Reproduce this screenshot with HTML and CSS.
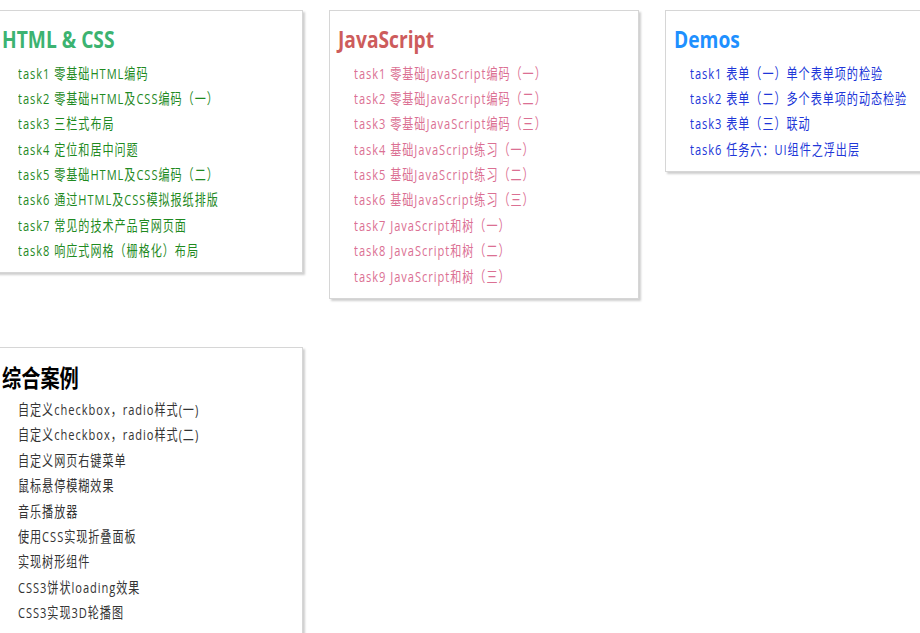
FILE: index.html
```html
<!DOCTYPE html>
<html lang="zh-CN">
<head>
<meta charset="utf-8">
<title>IFE 任务列表</title>
<link rel="stylesheet" href="styles.css">
</head>
<body>
<main class="board">
  <section class="card card-html">
    <h2 class="card-title"><span class="sq">HTML &amp; CSS</span></h2>
    <ul class="tasks">
      <li><a class="sq" href="#">task1 零基础HTML编码</a></li>
      <li><a class="sq" href="#">task2 零基础HTML及CSS编码（一）</a></li>
      <li><a class="sq" href="#">task3 三栏式布局</a></li>
      <li><a class="sq" href="#">task4 定位和居中问题</a></li>
      <li><a class="sq" href="#">task5 零基础HTML及CSS编码（二）</a></li>
      <li><a class="sq" href="#">task6 通过HTML及CSS模拟报纸排版</a></li>
      <li><a class="sq" href="#">task7 常见的技术产品官网页面</a></li>
      <li><a class="sq" href="#">task8 响应式网格（栅格化）布局</a></li>
    </ul>
  </section>
  <section class="card card-js">
    <h2 class="card-title"><span class="sq">JavaScript</span></h2>
    <ul class="tasks">
      <li><a class="sq" href="#">task1 零基础JavaScript编码（一）</a></li>
      <li><a class="sq" href="#">task2 零基础JavaScript编码（二）</a></li>
      <li><a class="sq" href="#">task3 零基础JavaScript编码（三）</a></li>
      <li><a class="sq" href="#">task4 基础JavaScript练习（一）</a></li>
      <li><a class="sq" href="#">task5 基础JavaScript练习（二）</a></li>
      <li><a class="sq" href="#">task6 基础JavaScript练习（三）</a></li>
      <li><a class="sq" href="#">task7 JavaScript和树（一）</a></li>
      <li><a class="sq" href="#">task8 JavaScript和树（二）</a></li>
      <li><a class="sq" href="#">task9 JavaScript和树（三）</a></li>
    </ul>
  </section>
  <section class="card card-demo">
    <h2 class="card-title"><span class="sq">Demos</span></h2>
    <ul class="tasks">
      <li><a class="sq" href="#">task1 表单（一）单个表单项的检验</a></li>
      <li><a class="sq" href="#">task2 表单（二）多个表单项的动态检验</a></li>
      <li><a class="sq" href="#">task3 表单（三）联动</a></li>
      <li><a class="sq" href="#">task6 任务六：UI组件之浮出层</a></li>
    </ul>
  </section>
  <section class="card card-case">
    <h2 class="card-title"><span class="sq">综合案例</span></h2>
    <ul class="tasks">
      <li><a class="sq" href="#">自定义checkbox，radio样式(一)</a></li>
      <li><a class="sq" href="#">自定义checkbox，radio样式(二)</a></li>
      <li><a class="sq" href="#">自定义网页右键菜单</a></li>
      <li><a class="sq" href="#">鼠标悬停模糊效果</a></li>
      <li><a class="sq" href="#">音乐播放器</a></li>
      <li><a class="sq" href="#">使用CSS实现折叠面板</a></li>
      <li><a class="sq" href="#">实现树形组件</a></li>
      <li><a class="sq" href="#">CSS3饼状loading效果</a></li>
      <li><a class="sq" href="#">CSS3实现3D轮播图</a></li>
    </ul>
  </section>
</main>
</body>
</html>
```
FILE: styles.css
```css
html {
  overflow: hidden;
}

body {
  margin: 0;
  background: #fff;
  font-family: "Open Sans", "Noto Sans CJK SC", sans-serif;
}

.board {
  display: grid;
  grid-template-columns: repeat(3, 310px);
  column-gap: 26px;
  row-gap: 48px;
  align-items: start;
  margin: 10px 0 0 -7px;
  width: 1000px;
}

.card {
  box-sizing: border-box;
  border: 1px solid #d6d6d6;
  box-shadow: 2px 2px 2px #cfcfcf;
  background: #fff;
  padding: 14px 8px 8.5px;
}

.card-title {
  margin: 0 0 7.5px;
  font-size: 24px;
  line-height: 28px;
  font-weight: 700;
}

.card-case .card-title {
  margin: 2px 0 5.5px;
}

.sq {
  display: inline-block;
  transform: scaleX(0.8);
  transform-origin: 0 50%;
  white-space: nowrap;
}

.tasks {
  list-style: none;
  margin: 0;
  padding: 0 0 0 16px;
}

.tasks li {
  font-size: 15px;
  line-height: 25.4px;
  height: 25.4px;
}

.tasks .sq {
  transform: scaleX(0.74);
  letter-spacing: 1.3px;
}

.tasks a {
  text-decoration: none;
  color: inherit;
}

.card-html .card-title { color: #3cb371; }
.card-html .tasks { color: #1f8a1f; }

.card-js .card-title { color: #cd5c5c; }
.card-js .tasks { color: #db7093; }

.card-demo .card-title { color: #1e90ff; }
.card-demo .tasks { color: #2036d8; }

.card-case .card-title { color: #000; }
.card-case .tasks { color: #333; }
```
